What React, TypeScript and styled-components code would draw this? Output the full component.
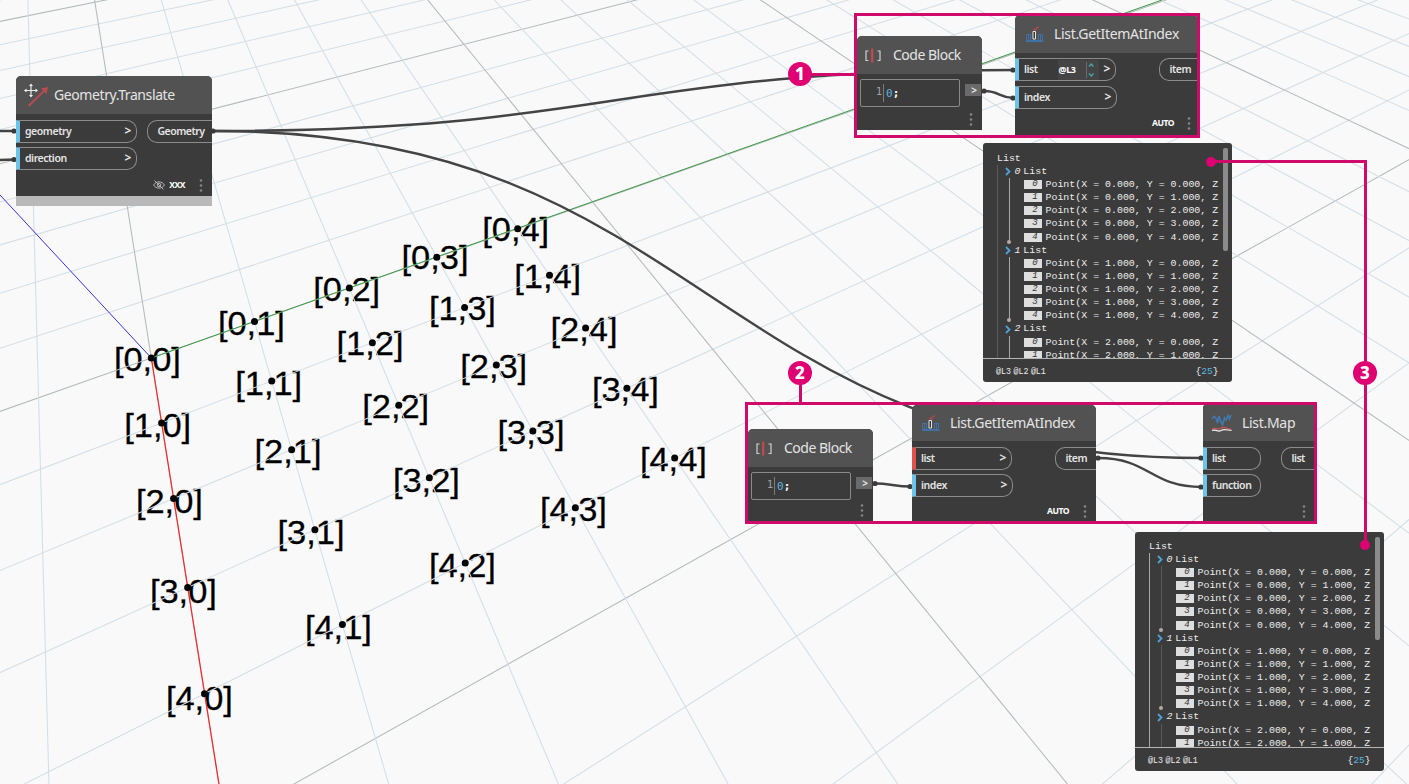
import React from "react";
import styled, { createGlobalStyle } from "styled-components";

const SANS = '"Noto Sans", "Open Sans", sans-serif';
const MONO = '"Liberation Mono", "DejaVu Sans Mono", monospace';
const MAGENTA = "#cf0a6b";
const PINK = "#df0071";
const DARK = "#3b3b3b";

const GlobalStyle = createGlobalStyle`
  * { box-sizing: border-box; }
  body { margin: 0; background: #f9f9f9; font-family: ${SANS}; overflow: hidden; }
`;

const Workspace = styled.main`
  position: relative;
  width: 1409px;
  height: 784px;
  overflow: hidden;
  background: #f9f9f9;
`;

const Layer = styled.svg`
  position: absolute;
  inset: 0;
  display: block;
`;

const Placed = styled.div<{ $x: number; $y: number }>`
  position: absolute;
  left: ${(p) => p.$x}px;
  top: ${(p) => p.$y}px;
`;

const NodeCard = styled.section<{ $w: number; $h: number; $flatRight?: boolean }>`
  display: flex;
  flex-direction: column;
  width: ${(p) => p.$w}px;
  height: ${(p) => p.$h}px;
  overflow: hidden;
  border-radius: ${(p) => (p.$flatRight ? "3px 0 0 0" : "5px 5px 0 0")};
  background: ${DARK};
  color: #e4e4e4;
`;

const NodeHeader = styled.header<{ $h: number; $pad: number }>`
  display: flex;
  align-items: center;
  flex: none;
  height: ${(p) => p.$h}px;
  padding-left: ${(p) => p.$pad}px;
  background: #525252;
`;

const NodeTitle = styled.h2<{ $gap: number; $track?: number }>`
  margin: 0 0 0 ${(p) => p.$gap}px;
  font-size: 14px;
  line-height: 20px;
  font-weight: 400;
  letter-spacing: ${(p) => p.$track ?? 0}px;
  white-space: nowrap;
`;

const Ports = styled.div<{ $top: number }>`
  display: flex;
  justify-content: space-between;
  align-items: flex-start;
  flex: 1;
  padding-top: ${(p) => p.$top}px;
`;

const PortColumn = styled.div<{ $gap: number }>`
  display: flex;
  flex-direction: column;
  gap: ${(p) => p.$gap}px;
`;

const InPort = styled.div<{ $w: number; $bar?: string }>`
  display: flex;
  align-items: center;
  width: ${(p) => p.$w}px;
  height: 23px;
  padding: 0 5px 2px 5px;
  border: 1px solid #8c8c8c;
  border-left: 4px solid ${(p) => p.$bar ?? "#6ec3e8"};
  border-radius: 0 10px 10px 0;
  font-size: 10.5px;
  font-weight: 600;
  letter-spacing: -0.45px;
  line-height: 14px;
`;

const Chevron = styled.span`
  margin-left: auto;
  font-size: 12px;
  font-weight: 700;
`;

const OutPort = styled.div<{ $w: number }>`
  display: flex;
  align-items: center;
  width: ${(p) => p.$w}px;
  height: 23px;
  padding: 0 0 2px 9.5px;
  border: 1px solid #8c8c8c;
  border-right: 0;
  border-radius: 10px 0 0 10px;
  font-size: 10.5px;
  font-weight: 600;
  letter-spacing: -0.5px;
  line-height: 14px;
`;

const LevelPicker = styled.span`
  display: flex;
  align-items: center;
  justify-content: space-between;
  width: 41px;
  height: 20px;
  margin: 2px 0 0 20px;
  padding: 0 3px 0 1px;
  background: #454545;
  font-size: 9px;
  font-weight: 700;
  color: #fff;
`;

const Footer = styled.footer<{ $pr: number; $pb: number; $gap: number }>`
  display: flex;
  align-items: center;
  justify-content: flex-end;
  flex: none;
  gap: ${(p) => p.$gap}px;
  height: 14px;
  margin-bottom: ${(p) => p.$pb}px;
  padding-right: ${(p) => p.$pr}px;
  font-size: 8.6px;
  font-weight: 700;
  letter-spacing: -0.5px;
  color: #fff;
`;

const RunState = styled.span<{ $after: number }>`
  margin-right: ${(p) => p.$after}px;
`;

const FrozenStrip = styled.div`
  flex: none;
  height: 10px;
  background: #b9b9b9;
`;

const CodeRow = styled.div<{ $top: number }>`
  display: flex;
  align-items: flex-start;
  flex: 1;
  padding: ${(p) => p.$top}px 1px 0 3px;
`;

const CodeBox = styled.div`
  display: flex;
  align-items: center;
  width: 100px;
  height: 28px;
  padding-left: 15px;
  border: 1px solid #8a8a8a;
  border-radius: 2px;
  font: 700 11px "DejaVu Sans Mono", monospace;
  color: #fff;
`;

const LineNumber = styled.span`
  width: 8px;
  height: 18px;
  margin-right: 2px;
  border-right: 1px solid #7d7d7d;
  line-height: 16px;
  font-size: 10px;
  font-weight: 400;
  color: #a5a5a5;
`;

const Digit = styled.span`
  font-weight: 400;
  color: #5db4e0;
`;

const CodeOut = styled.div`
  display: flex;
  align-items: center;
  justify-content: center;
  width: 16px;
  height: 12px;
  margin: 5px 0 0 auto;
  padding-left: 2px;
  background: #6a6a6a;
  font-size: 10px;
  line-height: 10px;
  font-weight: 700;
`;

const Preview = styled.section`
  display: flex;
  flex-direction: column;
  width: 248.5px;
  height: 238.5px;
  border-radius: 3px;
  background: ${DARK};
  color: #ececec;
  font-family: ${MONO};
  font-size: 9.93px;
`;

const PreviewBody = styled.div`
  display: flex;
  justify-content: space-between;
  flex: none;
  height: 216px;
  padding-left: 14px;
  border-bottom: 1px solid #b5b5b5;
  overflow: hidden;
`;

const Tree = styled.div<{ $top: number }>`
  padding-top: ${(p) => p.$top}px;
`;

const TreeLine = styled.div`
  height: 11.8px;
  line-height: 12.4px;
`;

const Branch = styled.div<{ $bright?: boolean }>`
  padding-left: 7px;
  border-left: 1px solid ${(p) => (p.$bright ? "#a8a8a8" : "#5a5a5a")};
`;

const GroupHead = styled.div`
  display: flex;
  align-items: center;
  height: 13.15px;
  line-height: 13.15px;
`;

const GroupIndex = styled.i`
  width: 8.8px;
  margin-left: 3.5px;
`;

const GroupItems = styled.div<{ $bright?: boolean; $open?: boolean }>`
  position: relative;
  margin-left: 4px;
  padding-left: 15px;

  &::before {
    content: "";
    position: absolute;
    left: 0;
    top: 0;
    bottom: 3px;
    width: 1px;
    background: ${(p) => (p.$bright ? "#a8a8a8" : "#5a5a5a")};
  }
  &::after {
    content: "";
    display: ${(p) => (p.$open ? "none" : "block")};
    position: absolute;
    left: -2px;
    bottom: 0;
    width: 4px;
    height: 4px;
    border-radius: 2px;
    background: #b5a8a4;
  }
`;

const Item = styled.div`
  display: flex;
  align-items: center;
  height: 13.15px;
  line-height: 13.15px;
  white-space: pre;
`;

const Badge = styled.i`
  width: 18px;
  height: 9px;
  margin-right: 3.5px;
  padding-left: 4px;
  background: #dedede;
  color: #333;
  font-size: 9px;
  line-height: 9.6px;
  text-align: center;
`;

const Scrollbar = styled.div`
  width: 5px;
  height: 103px;
  margin: 5px 4px 0 0;
  border-radius: 2px;
  background: #8b8b8b;
`;

const PreviewFooter = styled.footer`
  display: flex;
  align-items: center;
  justify-content: space-between;
  flex: 1;
  padding: 2px 13px 0 13px;
`;

const Levels = styled.span`
  display: flex;
  gap: 2.5px;
  font-size: 8.3px;
`;

const Count = styled.span`
  font-size: 9.6px;
`;

const Frame = styled.div<{ $w: number; $h: number }>`
  width: ${(p) => p.$w}px;
  height: ${(p) => p.$h}px;
  border: 3px solid ${MAGENTA};
`;

const Callout = styled.div`
  display: flex;
  align-items: center;
  justify-content: center;
  width: 24px;
  height: 24px;
  border-radius: 50%;
  background: ${PINK};
  color: #fff;
  font-size: 17px;
  font-weight: 800;
  line-height: 24px;
`;

/* Perspective projection of the ground plane onto the screen. */
const depth = (i: number, j: number) => 1 - 0.0699 * i + 0.0441 * j;
const project = (i: number, j: number): [number, number] => {
  const w = depth(i, j);
  return [(151.3 - 0.995 * i + 114.43 * j) / w, (358 + 35.43 * i - 22.24 * j) / w];
};

const NEAR = 0.06;
const range = (from: number, to: number) =>
  Array.from({ length: to - from + 1 }, (_, k) => from + k);

const gridLines = [
  ...range(-14, 15).map((i) => {
    const start = Math.max(-6, (NEAR - 1 + 0.0699 * i) / 0.0441);
    return { key: `i${i}`, n: i, a: project(i, start), b: project(i, 28) };
  }),
  ...range(-5, 28).map((j) => {
    const end = Math.min(16, (1 + 0.0441 * j - NEAR) / 0.0699);
    return { key: `j${j}`, n: j, a: project(-14, j), b: project(end, j) };
  }),
];

const labels: [string, number, number][] = [
  ["[0,0]", 115.7, 371], ["[0,1]", 219.7, 334.6], ["[0,2]", 315, 300.7], ["[0,3]", 403.3, 269.3], ["[0,4]", 484, 240.9],
  ["[1,0]", 126, 436.5], ["[1,1]", 237, 395], ["[1,2]", 338.3, 355.2], ["[1,3]", 430.7, 320.3], ["[1,4]", 516, 287.6],
  ["[2,0]", 137.7, 513], ["[2,1]", 256.3, 463.3], ["[2,2]", 364, 418.3], ["[2,3]", 462, 377.6], ["[2,4]", 552.3, 340.7],
  ["[3,0]", 151.7, 602.6], ["[3,1]", 279.3, 544], ["[3,2]", 394.7, 491.6], ["[3,3]", 499.3, 444], ["[3,4]", 593.7, 401.3],
  ["[4,0]", 167.7, 710], ["[4,1]", 306.7, 639.3], ["[4,2]", 430.7, 577.3], ["[4,3]", 541.7, 521.3], ["[4,4]", 641.7, 471.3],
];

function Viewport3D() {
  const points = range(0, 4).flatMap((i) => range(0, 4).map((j) => project(i, j)));
  return (
    <Layer width="1409" height="784" viewBox="0 0 1409 784">
      <g fontFamily='"Liberation Sans", Arial, sans-serif' fontSize="34" fill="#000" stroke="#000" strokeWidth="0.3">
        {labels.map(([text, x, y]) => (
          <text key={text} x={x - 1.8} y={y} textLength="67" lengthAdjust="spacingAndGlyphs">{text}</text>
        ))}
      </g>
      {gridLines.map((l) => (
        <line
          key={l.key}
          x1={l.a[0]} y1={l.a[1]} x2={l.b[0]} y2={l.b[1]}
          stroke={l.n % 5 === 0 ? "#b4babd" : "#d3dee6"}
          strokeWidth={1.05}
        />
      ))}
      <line x1="0" y1="195" x2="151.3" y2="358" stroke="#3a2fe8" />
      <line x1="151.3" y1="358" x2="1162" y2="0" stroke="#3c9a45" />
      <line x1="151.3" y1="358" x2="219" y2="784" stroke="#f5262c" strokeWidth="1.2" />
      {points.map(([x, y]) => (
        <circle key={`${x}-${y}`} cx={x} cy={y} r="3.5" fill="#050505" />
      ))}
    </Layer>
  );
}

function Wires() {
  const ends = [[14, 131], [14, 159.5], [213, 131], [1013, 70], [1013, 98], [984, 91], [875, 483.5], [910, 486.5], [1098, 458], [1201, 458], [1201, 487]];
  return (
    <Layer width="1409" height="784" viewBox="0 0 1409 784">
      <g fill="none" stroke="#444" strokeWidth="2.4">
        <path d="M0 131H15M0 160L15 159.5" />
        <path d="M213 131C614 131 614 70 1015 70" />
        <path d="M213 131C708 131 708 458 1203 458" />
        <path d="M984 91C1000 91 999 98 1014 98" />
        <path d="M875 483.5C890 483.5 895 486.5 911 486.5" />
        <path d="M1098 458C1150 458 1150 487 1202 487" />
      </g>
      {ends.map(([x, y]) => (
        <circle key={`${x}-${y}`} cx={x} cy={y} r="2.6" fill="#3b3b3b" />
      ))}
    </Layer>
  );
}

const Dots = () => (
  <svg width="4" height="13" viewBox="0 0 4 13" fill="#858585">
    <circle cx="2" cy="1.5" r="1.3" /><circle cx="2" cy="6.5" r="1.3" /><circle cx="2" cy="11.5" r="1.3" />
  </svg>
);

const TranslateIcon = () => (
  <svg width="26" height="26" viewBox="0 0 26 26" fill="none">
    <path d="M4.500 24L21 8" stroke="#b04b50" strokeWidth="2.2" />
    <path d="M17 6.500L24 5L22.500 12Z" fill="#bd4a4f" />
    <path d="M7 3V14M1.500 8.500H12.500" stroke="#ededed" strokeWidth="1.2" />
    <path d="M7 1.500L9 4H5ZM7 15.500L9 13H5ZM0 8.500L2.500 6.500V10.500ZM14 8.500L11.500 6.500V10.500Z" fill="#ededed" />
  </svg>
);

const BracketIcon = () => (
  <svg width="18" height="15" viewBox="0 0 18 15" fill="none">
    <path d="M3.500 3H1V12.500H3.500M12.500 3H15V12.500H12.500" stroke="#d0d0d0" strokeWidth="1.2" />
    <path d="M7.200 .5V14.500" stroke="#c24a4e" strokeWidth="2.2" />
  </svg>
);

const ItemIcon = () => (
  <svg width="18" height="17" viewBox="0 0 18 17" fill="none">
    <path d="M.5 8.500H4.500V14.500H.5ZM12.500 8.500H16.500V14.500H12.500ZM4.500 14.500H12.500M2.500 8.500V14.500M14.500 8.500V14.500M0 15.500H17.500" stroke="#3f72a8" />
    <path d="M7 5.500H9.500V13H7Z" stroke="#e6e6e6" strokeWidth="1" fill="#333" />
    <path d="M7.500 2.500L9 4L12.500 .5" stroke="#b5484c" strokeWidth="1.4" />
  </svg>
);

const MapIcon = () => (
  <svg width="22" height="20" viewBox="0 0 22 20" fill="none">
    <path d="M1 6L3 3.500L5 5L6.500 10L8 3L9.500 8L11.500 12L13.500 5L15 7L17 2.500L18.500 6L20 2" stroke="#4378ad" strokeWidth="1.7" />
    <path d="M1 16.500C4 13.500 6 17 9 15.500S14 13.500 17 16L20.500 16.500" stroke="#c95956" strokeWidth="1.3" />
    <path d="M1 17.500C5 16 7 19.500 10 17.500S16 17 20.500 17.500" stroke="#eee" strokeWidth="1.2" />
  </svg>
);

const EyeOffIcon = () => (
  <svg width="12" height="10" viewBox="0 0 12 10" fill="none" stroke="#b5b5b5">
    <path d="M.6 5C3 .8 9 .8 11.400 5C9 9.200 3 9.200 .6 5Z" />
    <circle cx="6" cy="5" r="1.8" />
    <path d="M1.500 .5L10.500 9.500" />
  </svg>
);

const Stepper = () => (
  <svg width="10" height="18" viewBox="0 0 10 18" fill="none">
    <path d="M.5 1V17" stroke="#6a6a6a" />
    <path d="M3 5.500L5.200 3L7.400 5.500M3 12.500L5.200 15L7.400 12.500" stroke="#49a8b0" strokeWidth="1.3" />
  </svg>
);

const FoldIcon = () => (
  <svg width="6" height="9" viewBox="0 0 6 9" fill="none">
    <path d="M1 1L4.500 4.500L1 8" stroke="#4ea3d6" strokeWidth="1.8" />
  </svg>
);

function CodeBlock({ x, y, h, header, top }: { x: number; y: number; h: number; header: number; top: number }) {
  return (
    <Placed $x={x} $y={y}>
      <NodeCard $w={125} $h={h}>
        <NodeHeader $h={header} $pad={8}>
          <BracketIcon />
          <NodeTitle $gap={10} $track={-0.5}>Code Block</NodeTitle>
        </NodeHeader>
        <CodeRow $top={top}>
          <CodeBox><LineNumber>1</LineNumber><Digit>0</Digit>;</CodeBox>
          <CodeOut>&gt;</CodeOut>
        </CodeRow>
        <Footer $pr={9} $pb={4} $gap={0}><Dots /></Footer>
      </NodeCard>
    </Placed>
  );
}

function OutputPreview({ x, y, top, bright }: { x: number; y: number; top: number; bright?: boolean }) {
  return (
    <Placed $x={x} $y={y}>
      <Preview>
        <PreviewBody>
          <Tree $top={top}>
            <TreeLine>List</TreeLine>
            <Branch $bright={bright}>
              {[0, 1, 2].map((g) => (
                <React.Fragment key={g}>
                  <GroupHead><FoldIcon /><GroupIndex>{g}</GroupIndex>List</GroupHead>
                  <GroupItems $bright={!bright} $open={g === 2}>
                    {(g < 2 ? [0, 1, 2, 3, 4] : [0, 1]).map((n) => (
                      <Item key={n}><Badge>{n}</Badge>{`Point(X = ${g}.000, Y = ${n}.000, Z`}</Item>
                    ))}
                  </GroupItems>
                </React.Fragment>
              ))}
            </Branch>
          </Tree>
          <Scrollbar />
        </PreviewBody>
        <PreviewFooter>
          <Levels><span>@L3</span><span>@L2</span><span>@L1</span></Levels>
          <Count>{"{"}<Digit>25</Digit>{"}"}</Count>
        </PreviewFooter>
      </Preview>
    </Placed>
  );
}

export default function App() {
  return (
    <Workspace>
      <GlobalStyle />
      <Viewport3D />
      <Wires />

      <Placed $x={16} $y={76}>
        <NodeCard $w={196} $h={130}>
          <NodeHeader $h={38} $pad={8}>
            <TranslateIcon />
            <NodeTitle $gap={4} $track={-0.4}>Geometry.Translate</NodeTitle>
          </NodeHeader>
          <Ports $top={6}>
            <PortColumn $gap={4}>
              <InPort $w={121}>geometry<Chevron>&gt;</Chevron></InPort>
              <InPort $w={121}>direction<Chevron>&gt;</Chevron></InPort>
            </PortColumn>
            <OutPort $w={65}>Geometry</OutPort>
          </Ports>
          <Footer $pr={9} $pb={4} $gap={4}><EyeOffIcon /><RunState $after={10}>XXX</RunState><Dots /></Footer>
          <FrozenStrip />
        </NodeCard>
      </Placed>

      <CodeBlock x={857} y={36} h={94} header={38} top={5} />
      <Placed $x={1015} $y={15}>
        <NodeCard $w={183} $h={120}>
          <NodeHeader $h={38} $pad={11}>
            <ItemIcon />
            <NodeTitle $gap={10} $track={-0.3}>List.GetItemAtIndex</NodeTitle>
          </NodeHeader>
          <Ports $top={5}>
            <PortColumn $gap={5}>
              <InPort $w={101}>list<LevelPicker>@L3<Stepper /></LevelPicker><Chevron>&gt;</Chevron></InPort>
              <InPort $w={102}>index<Chevron>&gt;</Chevron></InPort>
            </PortColumn>
            <OutPort $w={39}>item</OutPort>
          </Ports>
          <Footer $pr={7} $pb={5} $gap={0}><RunState $after={13}>AUTO</RunState><Dots /></Footer>
        </NodeCard>
      </Placed>
      <OutputPreview x={983} y={143} top={10} />

      <CodeBlock x={748} y={429} h={92} header={38} top={5} />
      <Placed $x={912} $y={405}>
        <NodeCard $w={184} $h={116}>
          <NodeHeader $h={36} $pad={10}>
            <ItemIcon />
            <NodeTitle $gap={10} $track={-0.3}>List.GetItemAtIndex</NodeTitle>
          </NodeHeader>
          <Ports $top={6}>
            <PortColumn $gap={4}>
              <InPort $w={100} $bar="#e0524d">list<Chevron>&gt;</Chevron></InPort>
              <InPort $w={101}>index<Chevron>&gt;</Chevron></InPort>
            </PortColumn>
            <OutPort $w={41}>item</OutPort>
          </Ports>
          <Footer $pr={9} $pb={3} $gap={0}><RunState $after={14}>AUTO</RunState><Dots /></Footer>
        </NodeCard>
      </Placed>
      <Placed $x={1203} $y={405}>
        <NodeCard $w={112} $h={116} $flatRight>
          <NodeHeader $h={36} $pad={8}>
            <MapIcon />
            <NodeTitle $gap={9} $track={-0.3}>List.Map</NodeTitle>
          </NodeHeader>
          <Ports $top={6}>
            <PortColumn $gap={4}>
              <InPort $w={58}>list</InPort>
              <InPort $w={58}>function</InPort>
            </PortColumn>
            <OutPort $w={34}>list</OutPort>
          </Ports>
          <Footer $pr={9} $pb={3} $gap={0}><Dots /></Footer>
        </NodeCard>
      </Placed>
      <OutputPreview x={1135} y={532} top={9} bright />

      <Placed $x={854} $y={13}><Frame $w={346} $h={125} /></Placed>
      <Placed $x={745} $y={402}><Frame $w={572} $h={122} /></Placed>
      <Layer width="1409" height="784" viewBox="0 0 1409 784">
        <path d="M800 74.500H856M800.500 373V404M1211 161.500H1365.500V545" fill="none" stroke={MAGENTA} strokeWidth="3" />
        <circle cx="1211" cy="162" r="5" fill={PINK} />
        <circle cx="1365" cy="545" r="5" fill={PINK} />
      </Layer>
      <Placed $x={788} $y={62}><Callout>1</Callout></Placed>
      <Placed $x={788} $y={361}><Callout>2</Callout></Placed>
      <Placed $x={1353} $y={361}><Callout>3</Callout></Placed>
    </Workspace>
  );
}
